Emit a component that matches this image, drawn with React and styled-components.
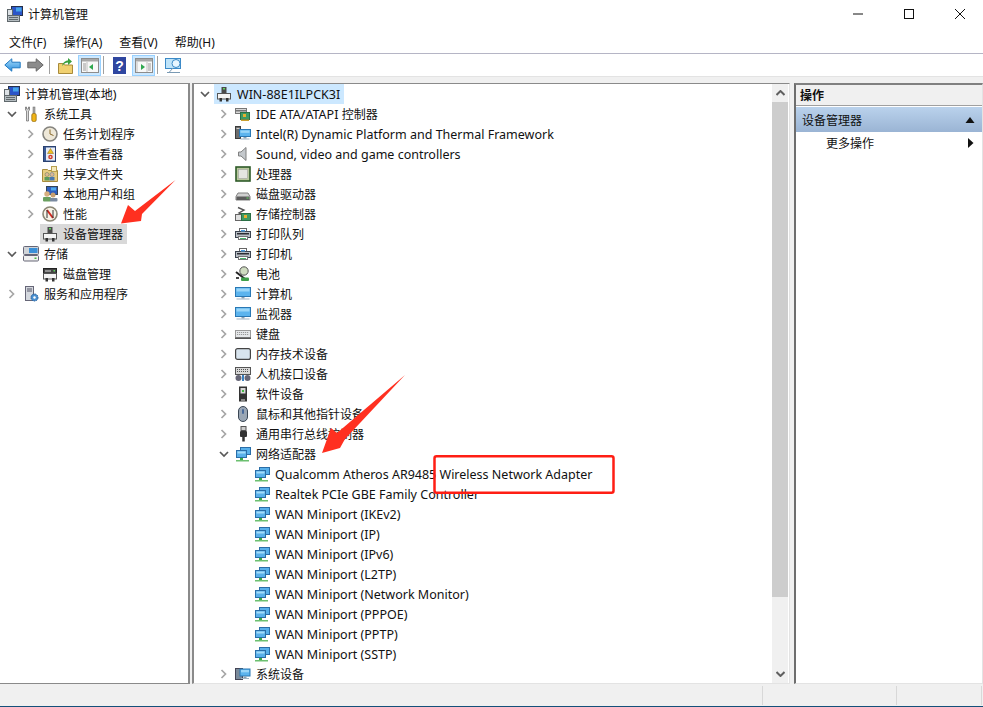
import React from "react";
import styled, { createGlobalStyle } from "styled-components";

const Global = createGlobalStyle`
  html, body { margin: 0; padding: 0; background: #fff; }
  body { width: 983px; height: 707px; overflow: hidden; font-family: "Noto Sans", "Noto Sans CJK SC", sans-serif; font-size: 12px; color: #111; }
  svg { display: block; flex: none; }
`;
const Window = styled.div`position: relative; width: 983px; height: 707px; display: flex; flex-direction: column; background: #fff; overflow: hidden;`;
const TitleBar = styled.div`height: 30px; box-sizing: border-box; padding: 0 0 2px 7px; display: flex; align-items: center; gap: 5px;`;
const TitleText = styled.span`flex: 1;`;
const WinBtn = styled.div`width: 46px; height: 28px; display: flex; align-items: center; justify-content: center;`;
const MenuBar = styled.div`height: 23px; display: flex; align-items: center; padding-left: 9px; gap: 17px; border-bottom: 1px solid #b5b5c5;`;
const Toolbar = styled.div`height: 22px; display: flex; align-items: center; padding-left: 1px;`;
const ToolBtn = styled.div`width: 23px; height: 21px; display: flex; align-items: center; justify-content: center; box-sizing: border-box; margin-left: ${p => p.$active ? 1 : 0}px; ${p => p.$active ? "background:#cce8ff;border:1px solid #99d1ff;" : ""}`;
const ToolSep = styled.div`width: 1px; height: 18px; background: #a0a0a0; margin: 0 4px 0 2px;`;
const Panes = styled.div`height: 608px; box-sizing: border-box; padding-top: 6px; background: #f0f0f0; display: flex; gap: 2px; border-top: 1px solid #e3e3e3;`;
const LeftPane = styled.div`width: 190px; box-sizing: border-box; background: #fff; border-top: 1px solid #8a8a8a; border-right: 2px solid #8a8a8a; border-bottom: 1px solid #8a8a8a; overflow: hidden;`;
const CenterPane = styled.div`width: 598px; box-sizing: border-box; display: flex; background: #fff; border-left: 2px solid #8a8a8a; border-top: 1px solid #8a8a8a; border-bottom: 1px solid #e3e3e3; border-right: 1px solid #e3e3e3;`;
const TreeWrap = styled.div`flex: 1; overflow: hidden;`;
const Row = styled.div`height: 20px; display: flex; align-items: center; white-space: nowrap; padding-left: ${p => p.$pad}px;`;
const Chevron = styled.div`width: 17px; height: 20px; display: flex; align-items: center;`;
const IconSlot = styled.div`width: 16px; height: 16px; margin-right: 5px;`;
const LatinRun = styled.span`font-size: 12.5px;`;
const Sel = styled.div`display: flex; align-items: center; height: 20px; background: ${p => p.$bg}; padding: 0 ${p => p.$r}px 0 2px; margin-left: -2px;`;
const Scrollbar = styled.div`width: 16px; background: #f0f0f0; margin-right: 1px; display: flex; flex-direction: column;`;
const ScrollEnd = styled.div`height: 18px; display: flex; align-items: center; justify-content: center;`;
const Thumb = styled.div`height: 495px; background: #cdcdcd;`;
const ScrollRest = styled.div`flex: 1;`;
const RightPane = styled.div`flex: 1; background: #fff; margin-left: 2px; box-sizing: border-box; border-left: 2px solid #6e6e6e; border-top: 2px solid #808080; border-right: 1px solid #e3e3e3; border-bottom: 1px solid #e3e3e3;`;
const ActionHead = styled.div`height: 20px; background: #f0f0f0; border-bottom: 1px solid #a0a0a0; display: flex; align-items: center; padding-left: 4px; font-weight: 700; margin-bottom: 1px;`;
const ActionGroup = styled.div`height: 25px; background: linear-gradient(#bad2ec, #9ab4d4); display: flex; align-items: center; justify-content: space-between; padding: 0 7px 0 6px;`;
const ActionItem = styled.div`height: 22px; display: flex; align-items: center; justify-content: space-between; padding: 0 8px 0 30px;`;
const StatusBar = styled.div`flex: 1; background: #f0f0f0; display: flex; border-bottom: 1px solid #14507a;`;
const StatusCell = styled.div`width: ${p => p.$w}px; flex: none; margin: 2px 0 1px; border-right: 1px solid #d8d8d8; box-sizing: border-box;`;
const Overlay = styled.svg`position: absolute; left: 0; top: 0; pointer-events: none;`;

const Chev = ({ open }) => open ? (
  <svg width="12" height="12" viewBox="0 0 12 12"><path d="M2 4 L6 8 L10 4" fill="none" stroke="#595959" strokeWidth="1.7" /></svg>
) : (
  <svg width="12" height="12" viewBox="0 0 12 12"><path d="M3.500 2 L7.500 6 L3.500 10" fill="none" stroke="#a6a6a6" strokeWidth="1.7" /></svg>
);

const Mon = ({ x = 1, y = 2, w = 13, h = 9 }) => (<g><rect x={x} y={y} width={w} height={h} fill="#5cb4ee" stroke="#2a78b4" /><rect x={x + 1} y={y + 1} width={w - 2} height={h / 3} fill="#9ad6f8" /><rect x={x + w / 2 - 1.5} y={y + h + .5} width="3" height="1.500" fill="#8aa0b0" /><rect x={x + 1} y={y + h + 2} width={w - 2} height="1" fill="#9fb4c4" /></g>);
const Net = () => (<g><rect x="5.500" y="1.500" width="10" height="7" fill="#58b0ea" stroke="#2a6ea8" /><rect x="1.500" y="4.500" width="10" height="7" fill="#58b0ea" stroke="#2a6ea8" /><rect x="2.500" y="5.500" width="8" height="2" fill="#a4dcfa" /><rect x="5" y="12" width="3" height="2" fill="#39a84a" /><rect x="1" y="14" width="13" height="1.500" fill="#6cc070" /></g>);
const Dev = () => (<g><rect x="5.500" y="1" width="5" height="6" fill="#4a4a4a" /><rect x="7" y="2" width="2" height="1.500" fill="#5cd65c" /><rect x="1.500" y="7.500" width="13" height="5.500" fill="#f4f4f4" stroke="#555" /><rect x="3.500" y="12" width="2.500" height="3.500" fill="#333" /><rect x="10" y="12" width="2.500" height="3.500" fill="#333" /></g>);
const Pc = () => (<g><rect x="4.500" y="0.500" width="11" height="9" fill="#2b55c8" stroke="#26304a" /><rect x="9" y="1.500" width="5.500" height="4" fill="#46a6ea" /><rect x="0.500" y="9.500" width="12" height="6" fill="#b4bcc0" stroke="#60686c" /><rect x="2" y="11" width="9" height="1" fill="#60686c" /><rect x="2" y="13" width="9" height="1" fill="#60686c" /><rect x="0.500" y="3.500" width="5" height="6" fill="#dde2e6" stroke="#60686c" /></g>);
const Printer = () => (<g><rect x="4.500" y="2.500" width="7" height="3" fill="#fff" stroke="#666" /><rect x="0.500" y="5.500" width="15" height="6" fill="#b8bec4" stroke="#3c4450" /><rect x="2" y="7" width="12" height="1.500" fill="#2c2c34" /><rect x="3.500" y="10.500" width="9" height="3" fill="#fff" stroke="#777" /><rect x="6" y="4" width="4" height="1.500" fill="#4a9be0" /><rect x="5" y="12" width="6" height="1" fill="#47b36a" /></g>);
const Card = () => (<g><rect x="0.500" y="2.500" width="11" height="5" fill="#d8d8d8" stroke="#777" /><rect x="0.500" y="4" width="11" height="1.500" fill="#777" /><rect x="5.500" y="6.500" width="9" height="7" fill="#3f9a62" stroke="#2a6f44" /><rect x="8" y="8" width="3" height="3" fill="#e8b030" /><rect x="6" y="13.500" width="8" height="1.500" fill="#c9a030" /></g>);
const WinIcon = ({ mirror }) => (
  <svg width="18" height="15" viewBox="0 0 18 15">
    <rect x=".5" y=".5" width="17" height="14" fill="#f8f8f8" stroke="#8c8c8c" />
    <rect x="1" y="1" width="16" height="2.500" fill="#a8a8a8" />
    {mirror ? <path d="M6 6v6l4-3z" fill="#2fa84f" /> : <path d="M12 6v6L8 9z" fill="#2fa84f" />}
    <path d={mirror ? "M13 6h3M13 8h3M13 10h3M13 12h3" : "M2 6h3M2 8h3M2 10h3M2 12h3"} stroke="#9a9a9a" />
    <path d={mirror ? "M12 4v10M2 4v10" : "M6 4v10"} stroke="#c0c0c0" />
  </svg>
);
const Icons = {
  computer: <Pc />,
  tools: <g><path d="M2.500 1v3l1 1v10h2V5l1-1V1L5.500 1v2h-2V1z" fill="#dcdcdc" stroke="#666" strokeWidth=".7" /><rect x="10" y="1" width="2" height="6.500" fill="#aaa" stroke="#666" strokeWidth=".5" /><rect x="8.800" y="7.500" width="4.400" height="8" rx="1.500" fill="#f0b418" stroke="#8c6408" strokeWidth=".7" /></g>,
  clock: <g><circle cx="8" cy="8" r="7" fill="#eee8d8" stroke="#85847e" strokeWidth="1.600" /><path d="M8 3.500V8L11.500 9.500" fill="none" stroke="#8a6a2a" strokeWidth="1" /></g>,
  event: <g><rect x="1.500" y="0.500" width="12" height="15" fill="#3b5a94" stroke="#2a4170" /><rect x="4" y="1.500" width="9" height="13" fill="#e8ecf4" /><path d="M8.500 2.500l3 5h-6z" fill="#f0c020" stroke="#8a6a10" strokeWidth=".5" /><circle cx="8.500" cy="11" r="2.300" fill="#d04030" /><circle cx="8.500" cy="11" r=".8" fill="#fff" /></g>,
  share: <g><path d="M.5 3.500h5l1 1h9v11H.5z" fill="#e8cc80" stroke="#a88c3c" /><rect x="9.500" y="0.500" width="5" height="5" fill="#f6eabc" stroke="#b8a050" /><circle cx="5" cy="8.500" r="2" fill="#e0b890" stroke="#5c7a5c" strokeWidth=".5" /><circle cx="10" cy="8.500" r="2" fill="#e0b890" stroke="#4a78b0" strokeWidth=".5" /><rect x="2.500" y="11" width="5" height="3.500" fill="#5c9a5c" /><rect x="7.500" y="11" width="5" height="3.500" fill="#4a78b0" /></g>,
  users: <g><rect x="4.500" y=".5" width="11" height="8" fill="#2f5fbf" stroke="#345" /><rect x="9" y="1.500" width="5" height="3" fill="#50aaea" /><circle cx="5" cy="8" r="2.700" fill="#d8b080" /><rect x="1" y="11" width="8" height="4.500" rx="1" fill="#6aa060" /><circle cx="11" cy="9" r="2.500" fill="#c8a070" /><rect x="8" y="12" width="7.500" height="3.500" rx="1" fill="#7a8aa0" /></g>,
  perf: <g><circle cx="8" cy="8" r="7" fill="#f6f3e6" stroke="#8a8674" strokeWidth="1.600" /><path d="M5 4l6 8" stroke="#d02a20" strokeWidth="2" /><path d="M5 4v8M11 4v8" stroke="#333" strokeWidth="1" /></g>,
  dev: <Dev />,
  storage: <g><rect x=".5" y=".5" width="15" height="8" rx="1" fill="#d0d4d8" stroke="#667" /><rect x="6" y="2" width="8.500" height="5" fill="#3a90d8" /><rect x=".5" y="9.500" width="15" height="5.500" rx="1" fill="#f0f0f0" stroke="#667" /><rect x="11.500" y="11.500" width="2" height="1.500" fill="#46b846" /></g>,
  disk: <g><rect x="1.500" y="2.500" width="13" height="5" fill="#444" stroke="#222" /><rect x="3" y="4.500" width="6" height="1" fill="#ddd" /><rect x="11.500" y="4" width="1.500" height="1.500" fill="#5cd65c" /><rect x="1.500" y="7.500" width="13" height="5.500" fill="#f4f4f4" stroke="#555" /><rect x="3.500" y="12" width="2.500" height="3.500" fill="#333" /><rect x="10" y="12" width="2.500" height="3.500" fill="#333" /></g>,
  service: <g><rect x="2.500" y=".5" width="8" height="14" fill="#d4d8de" stroke="#667" /><rect x="4" y="2.500" width="5" height="1" fill="#556" /><rect x="4" y="4.500" width="5" height="1" fill="#556" /><circle cx="11.500" cy="11.500" r="3.500" fill="#4a90d0" stroke="#2a5f9a" strokeDasharray="1.500 .8" /><circle cx="11.500" cy="11.500" r="1.200" fill="#fff" /></g>,
  ide: <Card />,
  intel: <g><rect x="0.500" y="0.500" width="5" height="12" fill="#6c6c6c" stroke="#3c3c3c" /><rect x="1.500" y="2" width="3" height="1" fill="#ccc" /><Mon x={4.5} y={3.5} w={11} h={7} /></g>,
  sound: <path d="M3.500 6h2.500l5-4.500v13L6 10H3.500z" fill="#c4c8cc" stroke="#808080" />,
  cpu: <g><rect x="1" y="1" width="14" height="14" fill="#b8c89c" stroke="#2e5a28" strokeWidth="1.600" /><rect x="3.500" y="3.500" width="9" height="9" fill="#e4e6e0" stroke="#999" strokeWidth=".5" /></g>,
  hdd: <g><path d="M3 7h10l2 3.500V14H1v-3.500z" fill="#d0d0d0" stroke="#808080" /><rect x="1.500" y="10.500" width="13" height="3.500" fill="#5c5c5c" /><rect x="11.500" y="11.500" width="2" height="1" fill="#5cd65c" /></g>,
  ctrl: <g><path d="M3 1.500l6 2.500-5 3 4 2" fill="none" stroke="#555" strokeWidth="1.400" /><rect x=".5" y="8.500" width="7" height="6" fill="#e0e0e0" stroke="#666" /><rect x="6.500" y="7.500" width="9" height="7" fill="#3f9a62" stroke="#2a6f44" /><rect x="9" y="9" width="3" height="3" fill="#e8b030" /></g>,
  printer: <Printer />,
  battery: <g><circle cx="9" cy="5" r="4.200" fill="#cfdcc0" stroke="#555" /><path d="M1 6l9 7" stroke="#222" strokeWidth="2" /><rect x="6" y="11.500" width="8" height="3.500" rx="1" fill="#3fa04a" /><rect x="1" y="11" width="3" height="2" fill="#444" /></g>,
  pc2: <Mon x={.5} y={1.5} w={15} h={9} />,
  keyboard: <g><rect x="0.500" y="4.500" width="15" height="7" fill="#e6e8ea" stroke="#9a9a9a" /><path d="M2 6.500h12M2 8.500h12" stroke="#999" strokeDasharray="1.200 .8" /><rect x="0" y="11.500" width="16" height="1.500" fill="#555" /></g>,
  mem: <rect x="0.600" y="2.600" width="14.800" height="10.800" rx="2" fill="#d8e4ee" stroke="#444" strokeWidth="1.200" />,
  hid: <g><rect x=".5" y="1.500" width="15" height="7" fill="#d8d8d8" stroke="#555" /><path d="M2 3.500h12M2 5.500h12" stroke="#555" strokeDasharray="1 1" /><circle cx="3.500" cy="12" r="3" fill="#667" /><circle cx="12.500" cy="12" r="3" fill="#667" /><rect x="7" y="9" width="2" height="6" fill="#3a80c0" /></g>,
  soft: <g><rect x="4" y="0.500" width="8" height="15" fill="#333" /><rect x="5.500" y="2" width="5" height="5.500" fill="#d8d8d8" /><rect x="7" y="4" width="2" height="2" fill="#46b846" /><rect x="6" y="13" width="4" height="2" fill="#888" /></g>,
  mouse: <g><rect x="3.500" y="0.500" width="9" height="15" rx="4.500" fill="#9aa6b4" stroke="#3a4654" /><rect x="7" y="3" width="2" height="5" rx="1" fill="#4a6a9a" /></g>,
  usb: <g><rect x="6" y=".5" width="5" height="4" fill="#ccc" stroke="#555" /><rect x="5" y="5" width="7" height="6" rx="1" fill="#333" /><path d="M8.500 11v4.500" stroke="#333" strokeWidth="2.500" /></g>,
  net: <Net />,
  sys: <g><rect x=".5" y="2.500" width="7" height="11" fill="#7a8a9a" stroke="#445" /><Mon x={5} y={3} w={10} h={7} /></g>,
};
const Ico = ({ n }) => <IconSlot><svg width="16" height="16" viewBox="0 0 16 16">{Icons[n]}</svg></IconSlot>;

const Mixed = ({ t }) => (
  <span>
    {t.split(/([\u4e00-\u9fff]+)/).map((part, i) => (i % 2 ? part : part ? <LatinRun key={i}>{part}</LatinRun> : null))}
  </span>
);

const left = [
  { pad: 6, i: "tools", t: "系统工具", open: true },
  { pad: 25, i: "clock", t: "任务计划程序" },
  { pad: 25, i: "event", t: "事件查看器" },
  { pad: 25, i: "share", t: "共享文件夹" },
  { pad: 25, i: "users", t: "本地用户和组" },
  { pad: 25, i: "perf", t: "性能" },
  { pad: 25, i: "dev", t: "设备管理器", none: true, sel: true },
  { pad: 6, i: "storage", t: "存储", open: true },
  { pad: 25, i: "disk", t: "磁盘管理", none: true },
  { pad: 6, i: "service", t: "服务和应用程序" },
];
const center = [
  ["ide", "IDE ATA/ATAPI 控制器"], ["intel", "Intel(R) Dynamic Platform and Thermal Framework"], ["sound", "Sound, video and game controllers"],
  ["cpu", "处理器"], ["hdd", "磁盘驱动器"], ["ctrl", "存储控制器"], ["printer", "打印队列"], ["printer", "打印机"], ["battery", "电池"],
  ["pc2", "计算机"], ["pc2", "监视器"], ["keyboard", "键盘"], ["mem", "内存技术设备"], ["hid", "人机接口设备"], ["soft", "软件设备"],
  ["mouse", "鼠标和其他指针设备"], ["usb", "通用串行总线控制器"],
];
const adapters = ["Qualcomm Atheros AR9485 Wireless Network Adapter", "Realtek PCIe GBE Family Controller", "WAN Miniport (IKEv2)", "WAN Miniport (IP)", "WAN Miniport (IPv6)", "WAN Miniport (L2TP)", "WAN Miniport (Network Monitor)", "WAN Miniport (PPPOE)", "WAN Miniport (PPTP)", "WAN Miniport (SSTP)"];

const TreeRow = ({ pad, i, t, open, none, bg, r }) => (
  <Row $pad={pad}>
    <Chevron>{none ? null : <Chev open={open} />}</Chevron>
    {bg ? <Sel $bg={bg} $r={r}><Ico n={i} /><Mixed t={t} /></Sel> : <><Ico n={i} /><Mixed t={t} /></>}
  </Row>
);

export default function App() {
  return (
    <Window>
      <Global />
      <TitleBar>
        <svg width="16" height="16" viewBox="0 0 16 16"><Pc /></svg>
        <TitleText>计算机管理</TitleText>
        <WinBtn><svg width="10" height="10"><path d="M0 5h10" stroke="#111" /></svg></WinBtn>
        <WinBtn><svg width="10" height="10"><rect x=".5" y=".5" width="9" height="9" fill="none" stroke="#111" /></svg></WinBtn>
        <WinBtn><svg width="10" height="10"><path d="M0 0l10 10M10 0L0 10" stroke="#111" /></svg></WinBtn>
      </TitleBar>
      <MenuBar>
        <span>文件(F)</span><span>操作(A)</span><span>查看(V)</span><span>帮助(H)</span>
      </MenuBar>
      <Toolbar>
        <ToolBtn><svg width="17" height="14" viewBox="0 0 17 14"><defs><linearGradient id="bk" x1="0" y1="0" x2="0" y2="1"><stop offset="0" stopColor="#a8dcfa" /><stop offset="1" stopColor="#2a8ede" /></linearGradient></defs><path d="M.8 7l7-6.200v3.400h8.400v5.600H7.800v3.400z" fill="url(#bk)" stroke="#1f78c0" /></svg></ToolBtn>
        <ToolBtn><svg width="17" height="14" viewBox="0 0 17 14"><path d="M16.200 7l-7-6.200v3.400H.8v5.600h8.400v3.400z" fill="#8c8c8c" stroke="#666" /></svg></ToolBtn>
        <ToolSep />
        <ToolBtn><svg width="15" height="17" viewBox="0 0 15 17"><path d="M.5 6.500h5l1 1.500h8v8.500H.5z" fill="#f0d070" stroke="#a88a3a" /><path d="M4 9C5 5 8 3.500 10 3.500V1l4 3.500-4 3.500V5.500C8 5.500 6 6.500 4 9z" fill="#3aa040" /></svg></ToolBtn>
        <ToolBtn $active><WinIcon /></ToolBtn>
        <ToolSep />
        <ToolBtn><svg width="13" height="17" viewBox="0 0 13 17"><rect width="13" height="17" fill="#2f46a0" /><text x="6.500" y="13.500" textAnchor="middle" fontSize="14" fontWeight="700" fill="#fff" fontFamily="Liberation Sans">?</text></svg></ToolBtn>
        <ToolBtn $active><WinIcon mirror /></ToolBtn>
        <ToolSep />
        <ToolBtn><svg width="17" height="17" viewBox="0 0 17 17"><rect x=".5" y="1.500" width="15" height="10" fill="#bfe4fa" stroke="#3c8ac8" /><path d="M8 11l-4 4.500M2 15.500h13" stroke="#7a9ab4" /><circle cx="11" cy="6.500" r="4" fill="#e8f6ff" stroke="#3c8ac8" /></svg></ToolBtn>
      </Toolbar>
      <Panes>
        <LeftPane>
          <Row $pad={4}><Ico n="computer" /><Mixed t="计算机管理(本地)" /></Row>
          {left.map(r => (
            <TreeRow key={r.t} pad={r.pad} i={r.i} t={r.t} open={r.open} none={r.none} bg={r.sel ? "#d9d9d9" : null} r={4} />
          ))}
        </LeftPane>
        <CenterPane>
          <TreeWrap>
            <TreeRow pad={5} i="dev" t="WIN-88E1ILPCK3I" open bg="#cce8ff" r={4} />
            {center.map(([i, t], k) => <TreeRow key={k} pad={24} i={i} t={t} />)}
            <TreeRow pad={24} i="net" t="网络适配器" open />
            {adapters.map(t => <TreeRow key={t} pad={43} i="net" t={t} none />)}
            <TreeRow pad={24} i="sys" t="系统设备" />
          </TreeWrap>
          <Scrollbar>
            <ScrollEnd><svg width="9" height="6"><path d="M.5 5l4-4 4 4" fill="none" stroke="#606060" strokeWidth="2" /></svg></ScrollEnd>
            <Thumb />
            <ScrollRest />
            <ScrollEnd><svg width="9" height="6"><path d="M.5 1l4 4 4-4" fill="none" stroke="#606060" strokeWidth="2" /></svg></ScrollEnd>
          </Scrollbar>
        </CenterPane>
        <RightPane>
          <ActionHead>操作</ActionHead>
          <ActionGroup>设备管理器<svg width="10" height="6"><path d="M5 0l4.500 6h-9z" fill="#111" /></svg></ActionGroup>
          <ActionItem>更多操作<svg width="6" height="10"><path d="M0 0l5.500 5L0 10z" fill="#111" /></svg></ActionItem>
        </RightPane>
      </Panes>
      <StatusBar>
        <StatusCell $w={763} />
        <StatusCell $w={134} />
        <StatusCell $w={85} />
      </StatusBar>
      <Overlay width="983" height="707" viewBox="0 0 983 707">
        <path d="M175.500 180 L142 214 L141 221 L121 223.500 L128 205 L135 211 Z" fill="#ff3020" />
        <path d="M405 375 L345 439 L340 448 L322 453 L331 428 L337 433 Z" fill="#ff3020" />
        <rect x="434.500" y="456.200" width="179" height="36.600" rx="2" fill="none" stroke="#ff1e14" strokeWidth="2.500" />
      </Overlay>
    </Window>
  );
}
